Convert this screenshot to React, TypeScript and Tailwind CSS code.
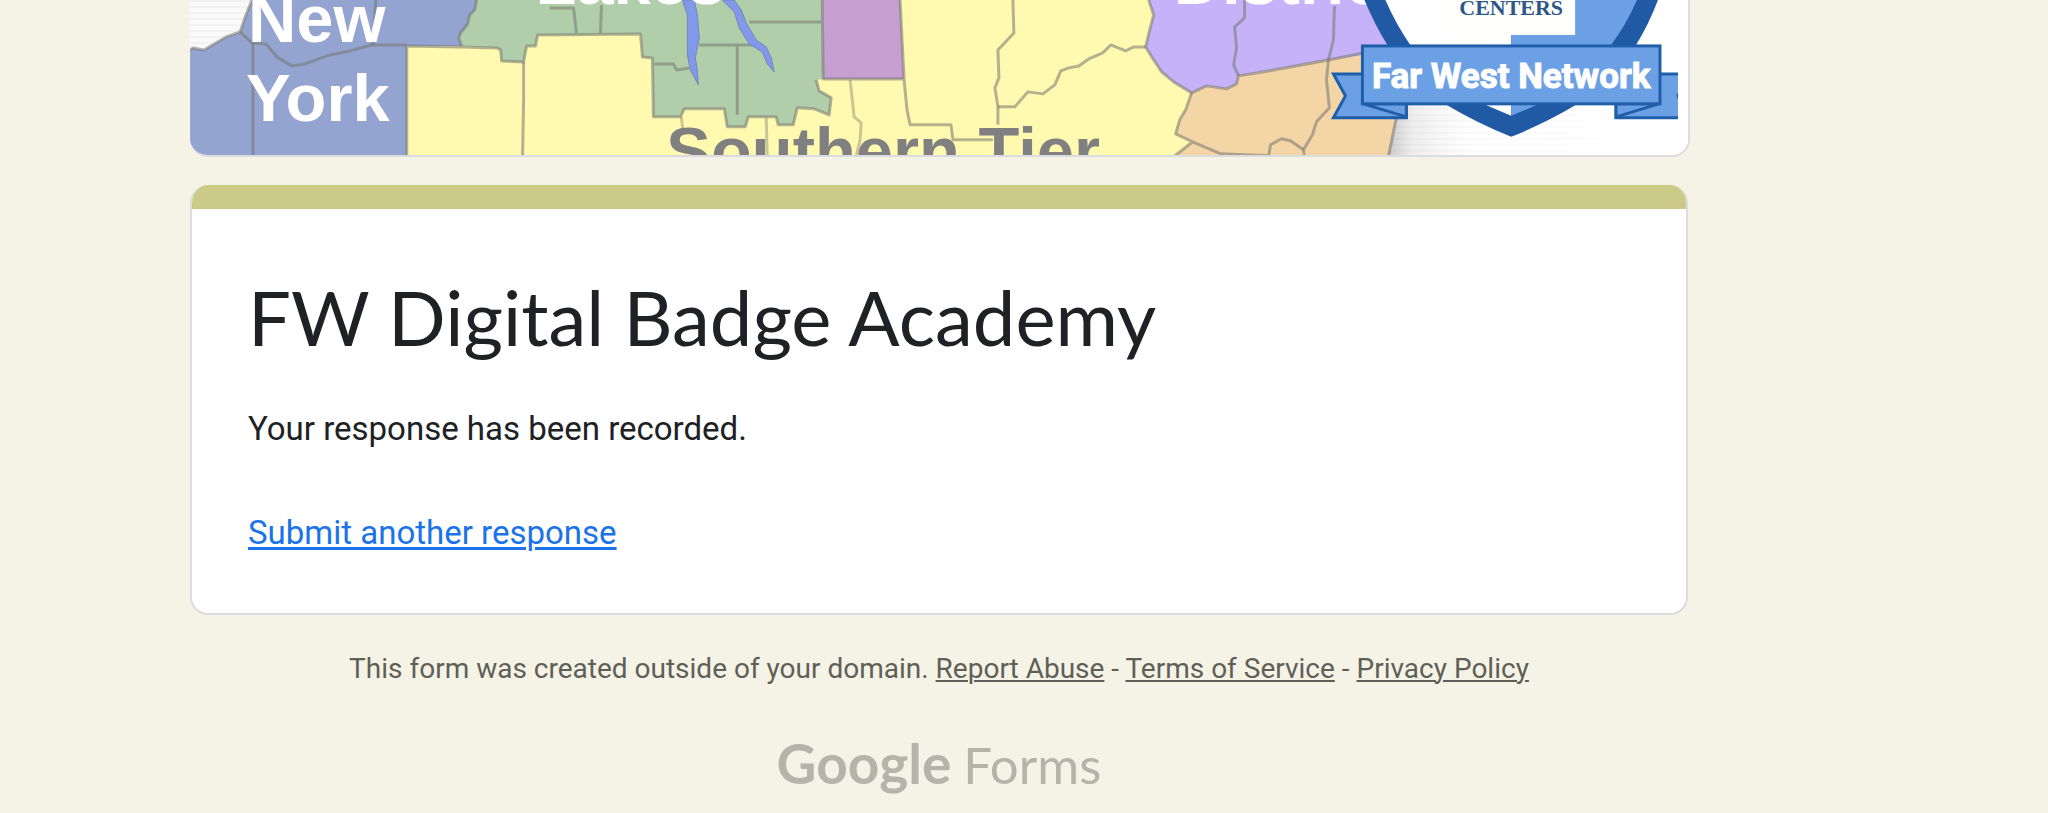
import { FC, ReactNode } from 'react';

type FooterLinkProps = {
  href: string;
  children: ReactNode;
}

const FooterLink: FC<FooterLinkProps> = ({ href, children }) => (
  <a href={href} className="underline decoration-2 underline-offset-2">{children}</a>
)

const HeaderMap: FC = () => {
  return (
    <svg
      viewBox="190 0 1500 155"
      className="block h-auto w-full"
      role="img"
      aria-label="Map of New York regions with the Far West Network badge"
    >
      <defs>
        <linearGradient id="paper" x1="1390" x2="1470" y1="0" y2="0" gradientUnits="userSpaceOnUse">
          <stop offset="0" stopColor="#c9c9c9" />
          <stop offset="0.3" stopColor="#ececec" />
          <stop offset="1" stopColor="#ffffff" />
        </linearGradient>
        <linearGradient id="fade" x1="1380" x2="1680" y1="0" y2="0" gradientUnits="userSpaceOnUse">
          <stop offset="0" stopColor="#fff" stopOpacity="0" />
          <stop offset="1" stopColor="#fff" />
        </linearGradient>
        <pattern id="lines" width="8" height="6" patternUnits="userSpaceOnUse">
          <rect width="8" height="2" fill="#000" opacity="0.03" />
        </pattern>
        <clipPath id="ribbonEnd">
          <rect x="1600" y="60" width="80" height="70" />
        </clipPath>
      </defs>

      <rect x="190" width="1500" height="157" fill="#fff" />
      <rect x="1380" width="310" height="157" fill="url(#paper)" />
      <rect x="1380" width="310" height="157" fill="url(#lines)" />
      <rect x="1380" width="310" height="157" fill="url(#fade)" />

      {/* regions */}
      <path d="M405 34H1200V157H405Z" fill="#fffab0" />
      <path d="M850 0H1160V60H850Z" fill="#fffab0" />
      <path d="M190 50L193 48L204 50L214 44L226 37L240 32L246 15L252 0H480V46H407V157H190Z" fill="#93a4d0" />
      <path d="M190 0H252L246 15L240 32L226 37L214 44L204 50L193 48L190 50Z" fill="#fafafa" />
      <path d="M190 0H252L246 15L240 32L190 50Z" fill="url(#lines)" />
      <path
        d="M477 0L475 10L470 15L468 24L461 33L459 38L462 46L497 48L501 50L502 61L524 62L527 46L536 46L538 35L641 34L643 57L653 58L654 117H681L685 109H725L728 127H746L749 117H777L779 125H794L798 108L815 109L830 115L832 98L820 91L817 80L824 79L823 0Z"
        fill="#b1ceab"
      />
      <path d="M823 0H901L905 79H824Z" fill="#c49fd0" />
      <path
        d="M1150 0L1155 15L1151 30L1147 47L1155 60L1163 72L1175 82L1193 93L1208 86L1228 89L1238 84L1240 76L1330 60L1400 50V0Z"
        fill="#c6b2f8"
      />
      <path
        d="M1193 93L1208 86L1228 89L1238 84L1240 76L1330 60L1400 50L1397 120L1390 157H1175L1194 142L1177 134L1181 120L1187 110Z"
        fill="#f3d5a6"
      />

      {/* county borders */}
      <g fill="none" stroke="#77776f" strokeOpacity="0.55" strokeWidth="3" strokeLinejoin="round">
        <path d="M252 0L246 15L240 32L226 37L214 44L204 50L193 48L190 50" />
        <path d="M240 32L252 43L266 44L278 58L292 66L305 64L330 55L350 51L372 45L407 45" />
        <path d="M253 43V157M376 0L373 45" />
        <path d="M477 0L475 10L470 15L468 24L461 33L459 38L462 46" />
        <path d="M407 157V46L462 47L497 48L501 50L502 61L524 62L527 46L536 46L538 35L641 34L643 57L653 58L654 117H681L685 109H725L728 127H746L749 117H777L779 125H794L798 108L815 109L830 115L832 98L820 91L817 80" />
        <path d="M524 62V100L523 157" />
        <path d="M550 8H574L577 33M602 5L601 33M655 64H674L677 70L690 68M700 45H757M738 45V115M750 22H822" />
        <path d="M823 0L824 79H905L901 0M905 80L908 110L911 125H952L954 140H994" />
        <path d="M851 80L855 117L862 123L861 140L857 157M682 117L684 135M767 118L768 157" strokeOpacity="0.4" />
        <path d="M1014 0L1015 33L999 50L1000 78L996 88L999 107V125" />
        <path d="M999 107H1016L1029 92L1044 94L1056 85L1062 71L1070 68L1080 66L1090 59L1104 53L1112 45L1127 51L1135 47H1147" />
        <path d="M1150 0L1155 15L1151 30L1147 47L1155 60L1163 72L1175 82L1193 93L1208 86L1228 89L1238 84L1240 76L1270 71L1330 60L1365 53" />
        <path d="M1246 0V18L1236 27L1238 48L1235 65L1240 76M1336 6L1335 40L1330 60L1328 80L1331 108L1318 122L1314 135L1305 150L1306 157" />
        <path d="M1193 93L1187 110L1181 120L1177 134L1194 142L1175 157M1194 142L1222 154L1270 156M1270 157L1272 145L1283 139L1292 141L1305 150" />
        <path d="M1398 118L1390 157" />
      </g>

      {/* lakes */}
      <path d="M683 0L688 15L688 55L691 70L699 85L698 70L696 58L700 38L698 15L695 0Z" fill="#8199ea" stroke="#7487b8" />
      <path d="M723 0L735 12L740 28L750 44L763 52L768 64L775 72L772 58L767 47L757 40L747 23L742 10L735 0Z" fill="#8199ea" stroke="#7487b8" />

      <g className="font-['Liberation_Sans',Arial,sans-serif] text-[67px] font-bold" fill="#fff">
        <text x="248" y="42">New</text>
        <text x="246" y="121">York</text>
        <text x="536" y="4">Lakes</text>
        <text x="1175" y="4">District</text>
        <text x="667" y="174" fill="#808080">Southern Tier</text>
      </g>

      {/* badge */}
      <path d="M1366 0Q1377 26 1389 45Q1420 92 1448 105Q1480 124 1513 137Q1546 124 1578 105Q1608 92 1638 45Q1650 26 1660 0Z" fill="#205aa5" />
      <path d="M1387 0Q1398 25 1412 45Q1450 96 1487 105L1513 116V0Z" fill="#fff" />
      <path d="M1639 0Q1628 25 1613 45Q1576 96 1539 105L1513 116V0Z" fill="#6ca0e5" />
      <rect x="1448" width="129" height="35" fill="#fefefb" />
      <text
        x="1513"
        y="15"
        textAnchor="middle"
        fill="#2d5689"
        className="font-['Liberation_Serif',serif] text-[22px] font-bold"
      >
        CENTERS
      </text>

      <g fill="#6ca0e5" stroke="#205ea9" strokeWidth="3">
        <path d="M1335 74H1408V118H1335L1347 96Z" />
        <path d="M1365 104L1408 117V104Z" />
        <g clipPath="url(#ribbonEnd)">
          <path d="M1618 74H1692L1680 96L1692 118H1618Z" />
          <path d="M1661 104L1618 117V104Z" />
        </g>
        <rect x="1364" y="46" width="298" height="58" />
      </g>
      <text
        x="1513"
        y="88"
        textAnchor="middle"
        fill="#fff"
        stroke="#fff"
        strokeWidth="1"
        className="font-[Roboto,sans-serif] text-[35px] font-bold"
      >
        Far West Network
      </text>
    </svg>
  )
}

const ResponseCard: FC = () => {
  return (
    <section className="mt-7 overflow-hidden rounded-[18px] border-2 border-t-0 border-[#dadce0] bg-white">
      <div className="-mx-0.5 h-6 bg-[#cbca87]" />
      <div className="px-14 pt-15 pb-14">
        <h1 className="font-[Lato,sans-serif] text-[76px] leading-[96px] text-[#202124]">
          FW Digital Badge Academy
        </h1>
        <p className="mt-10 text-[33px] leading-[48px] text-[#202124]">Your response has been recorded.</p>
        <a
          href="#"
          className="mt-14 inline-block text-[33px] leading-[48px] text-[#1a73e8] underline decoration-3 underline-offset-3"
        >
          Submit another response
        </a>
      </div>
    </section>
  )
}

const App: FC = () => {
  return (
    <div className="min-h-screen bg-[#f5f3e6] pr-[360px] pl-[190px] font-[Roboto,sans-serif]">
      <main>
        <div className="-mr-0.5 overflow-hidden rounded-b-[18px] border-r-2 border-b-2 border-[#dadce0]">
          <HeaderMap />
        </div>
        <ResponseCard />
      </main>
      <footer className="mt-8 text-center text-[#5f5f58]">
        <p className="text-[28px] leading-[44px]">
          This form was created outside of your domain.{' '}
          <FooterLink href="#report">Report Abuse</FooterLink> -{' '}
          <FooterLink href="#terms">Terms of Service</FooterLink> -{' '}
          <FooterLink href="#privacy">Privacy Policy</FooterLink>
        </p>
        <a
          href="#forms"
          className="mt-10 inline-flex items-baseline gap-3 font-[Lato,sans-serif] leading-[64px] text-[#b5b4a9]"
        >
          <span className="text-[55px] font-bold">Google</span>
          <span className="text-[51px]">Forms</span>
        </a>
      </footer>
    </div>
  )
}

export default App
